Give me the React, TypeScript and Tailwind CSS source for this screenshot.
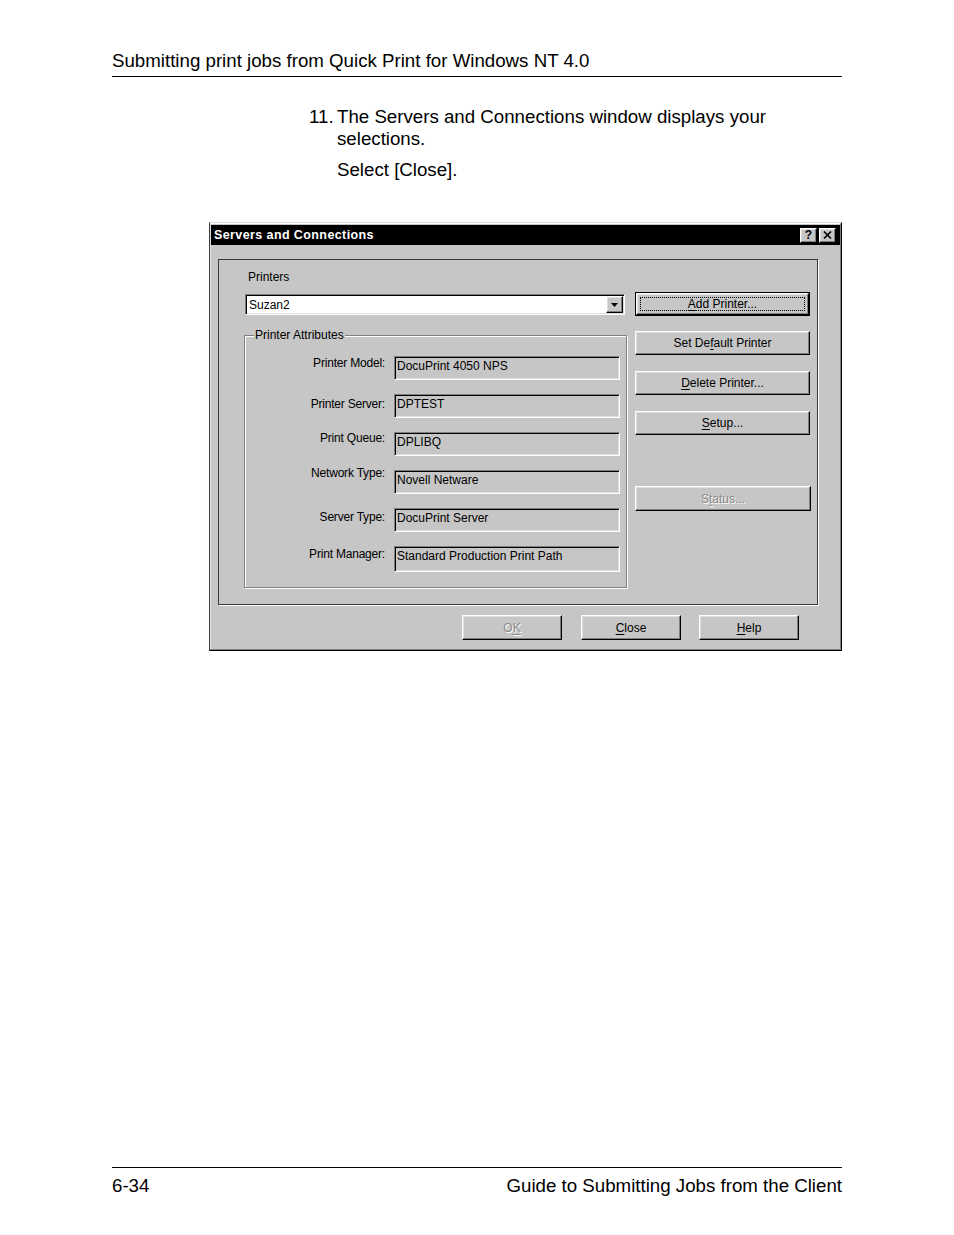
import React from "react";

const raised =
  "border border-t-white border-l-white border-r-black border-b-black shadow-[inset_-1px_-1px_0_#808080,inset_1px_1px_0_#dfdfdf] bg-[#c6c6c6]";
const sunken =
  "border border-t-[#808080] border-l-[#808080] border-r-white border-b-white shadow-[inset_1px_1px_0_#000,inset_-1px_-1px_0_#dfdfdf]";

const attributes = [
  { label: "Printer Model:", value: "DocuPrint 4050 NPS", offset: "mt-[0px]" },
  { label: "Printer Server:", value: "DPTEST", offset: "mt-[3px]" },
  { label: "Print Queue:", value: "DPLIBQ", offset: "mt-[-1px]" },
  { label: "Network Type:", value: "Novell Netware", offset: "mt-[-4px]" },
  { label: "Server Type:", value: "DocuPrint Server", offset: "mt-[2px]" },
  { label: "Print Manager:", value: "Standard Production Print Path", offset: "mt-[1px]" },
];

function WinButton({
  children,
  disabled,
  className = "",
}: {
  children: React.ReactNode;
  disabled?: boolean;
  className?: string;
}) {
  return (
    <div
      className={`${raised} flex items-center justify-center text-[12px] leading-[14px] ${
        disabled ? "text-[#8a8a8a] [text-shadow:1px_1px_0_#fff]" : "text-black"
      } ${className}`}
    >
      {children}
    </div>
  );
}

function Mn({ children }: { children: React.ReactNode }) {
  return <span className="underline underline-offset-[2px]">{children}</span>;
}

function Dialog() {
  return (
    <div className="ml-[209px] w-[633px] h-[429px] border border-t-[#dcdcdc] border-l-[#404040] border-r-black border-b-black bg-[#c6c6c6] font-['Liberation_Sans',Arial,sans-serif]">
      <div className="h-full border border-t-white border-l-[#dfdfdf] border-r-[#808080] border-b-[#808080] pt-[1px]">
        {/* title bar */}
        <div className="h-[20px] bg-black flex items-center pl-[3px] pr-[4px]">
          <span className="text-white font-bold text-[12.5px] tracking-[0.4px]">Servers and Connections</span>
          <div className="ml-auto flex gap-[2px]">
            <div className={`${raised} w-[17px] h-[15px] flex items-center justify-center text-[12px] font-bold leading-none`}>
              ?
            </div>
            <div className={`${raised} w-[17px] h-[15px] flex items-center justify-center`}>
              <svg width="9" height="8" viewBox="0 0 9 8">
                <path d="M1 0.5 L8 7.5 M8 0.5 L1 7.5" stroke="#000" strokeWidth="1.6" />
              </svg>
            </div>
          </div>
        </div>

        {/* main panel */}
        <div className="ml-[7px] mt-[14px] w-[600px] h-[346px] border border-[#3a3a3a] shadow-[1px_1px_0_#fff] flex pl-[25px]">
          {/* left column */}
          <div className="w-[383px] flex flex-col">
            <div className="mt-[10px] ml-[4px] text-[12px] leading-[14px]">Printers</div>
            <div className={`${sunken} bg-white ml-[1px] mt-[10px] w-[380px] h-[21px] flex items-center pl-[3px] pr-[1px]`}>
              <span className="text-[12px] leading-[14px]">Suzan2</span>
              <div className={`${raised} ml-auto w-[17px] h-[17px] flex items-center justify-center`}>
                <svg width="7" height="4" viewBox="0 0 7 4">
                  <path d="M0 0 H7 L3.5 4 Z" fill="#000" />
                </svg>
              </div>
            </div>

            <div className="relative mt-[20px] h-[253px] border border-[#808080] shadow-[1px_1px_0_#fff,inset_1px_1px_0_#fff] pt-[20px]">
              <span className="absolute -top-[8px] left-[9px] px-[1px] bg-[#c6c6c6] text-[12px] leading-[14px]">
                Printer Attributes
              </span>
              <div className="flex flex-col gap-[14px]">
                {attributes.map((a, i) => (
                  <div key={a.label} className="flex items-start">
                    <div className={`w-[140px] text-right text-[12px] leading-[14px] tracking-[-0.2px] ${a.offset}`}>{a.label}</div>
                    <div
                      className={`${sunken} ml-[9px] w-[226px] ${
                        i === attributes.length - 1 ? "h-[26px]" : "h-[24px]"
                      } pl-[2px] pt-[2px] text-[12px] leading-[14px]`}
                    >
                      {a.value}
                    </div>
                  </div>
                ))}
              </div>
            </div>
          </div>

          {/* right column */}
          <div className="ml-[8px] w-[176px] flex flex-col">
            <div className="mt-[32px] h-[24px] w-[175px] border border-black">
              <WinButton className="h-full w-full relative">
                <div className="absolute inset-[3px] border border-dotted border-black" />
                <span>
                  <Mn>A</Mn>dd Printer...
                </span>
              </WinButton>
            </div>
            <WinButton className="mt-[15px] h-[24px] w-[175px]">
              <span>
                Set De<Mn>f</Mn>ault Printer
              </span>
            </WinButton>
            <WinButton className="mt-[16px] h-[24px] w-[175px]">
              <span>
                <Mn>D</Mn>elete Printer...
              </span>
            </WinButton>
            <WinButton className="mt-[16px] h-[24px] w-[175px]">
              <span>
                <Mn>S</Mn>etup...
              </span>
            </WinButton>
            <WinButton disabled className="mt-[51px] h-[25px] w-[176px]">
              <span>
                S<Mn>t</Mn>atus...
              </span>
            </WinButton>
          </div>
        </div>

        {/* bottom buttons */}
        <div className="ml-[7px] mt-[10px] w-[600px] flex justify-end pr-[19px]">
          <WinButton disabled className="w-[100px] h-[25px]">
            <span>
              O<Mn>K</Mn>
            </span>
          </WinButton>
          <WinButton className="ml-[19px] w-[100px] h-[25px]">
            <span>
              <Mn>C</Mn>lose
            </span>
          </WinButton>
          <WinButton className="ml-[18px] w-[100px] h-[25px]">
            <span>
              <Mn>H</Mn>elp
            </span>
          </WinButton>
        </div>
      </div>
    </div>
  );
}

export default function App() {
  return (
    <div className="w-[954px] h-[1235px] bg-white text-black flex flex-col font-['Liberation_Sans',Arial,sans-serif]">
      <header className="ml-[112px] w-[730px] pt-[50px] pb-[4px] border-b border-black">
        <p className="text-[18.7px] leading-[22px]">Submitting print jobs from Quick Print for Windows NT 4.0</p>
      </header>

      <div className="ml-[309px] mt-[29px] flex text-[18.7px] leading-[22px]">
        <span className="w-[28px]">11.</span>
        <div className="w-[470px]">
          <p>The Servers and Connections window displays your selections.</p>
          <p className="mt-[9px]">Select [Close].</p>
        </div>
      </div>

      <div className="mt-[41px]">
        <Dialog />
      </div>

      <footer className="mt-auto ml-[112px] w-[730px] border-t border-black pt-[7px] pb-[38px] flex justify-between text-[18.7px] leading-[22px]">
        <span>6-34</span>
        <span>Guide to Submitting Jobs from the Client</span>
      </footer>
    </div>
  );
}
